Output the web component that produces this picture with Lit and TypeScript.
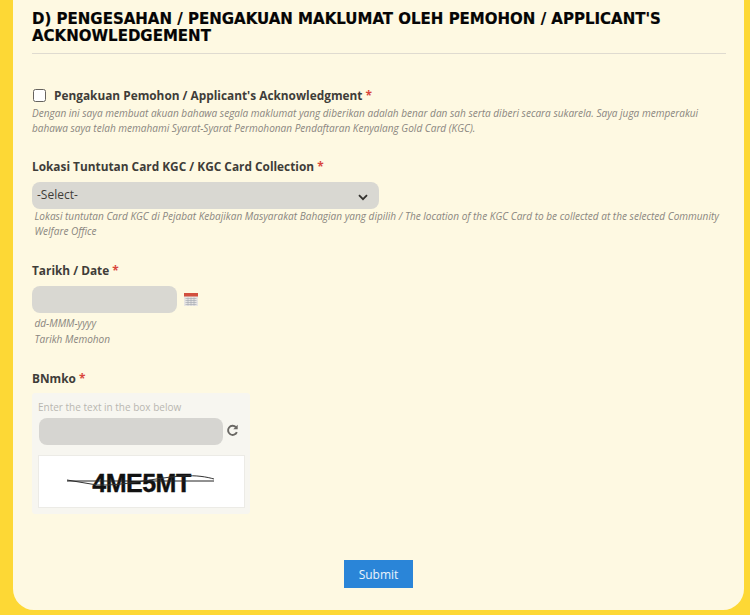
import { LitElement, html, css } from "lit";
import { customElement } from "lit/decorators.js";

@customElement("app-root")
export class AppRoot extends LitElement {
  static styles = css`
    :host { display: block; width: 750px; height: 615px; overflow: hidden; background: #fdd835; font-family: "Open Sans", sans-serif; }
    .card { box-sizing: border-box; width: 731px; height: 610px; margin-left: 13px; background: #fef9e2; border-radius: 0 0 21px 21px; padding: 11px 18px 0 19px; display: flex; flex-direction: column; }
    h2 { margin: 0; font: bold 15px/17px "DejaVu Sans", sans-serif; color: #050505; -webkit-text-stroke: 0.2px #050505; }
    hr { margin: 8px 0 0; border: 0; height: 1px; background: #dfdbd0; }
    .label { font-size: 11.85px; line-height: 15px; font-weight: 700; color: #3f3d39; }
    .req { color: #d9463c; }
    .help { font-size: 10.05px; line-height: 15px; font-style: italic; color: #8a8680; }
    .ack { margin-top: 32px; display: flex; align-items: center; gap: 8px; height: 18px; }
    .box { box-sizing: border-box; width: 13px; height: 13px; margin: 1px 0 0 1px; background: #fff; border: 1px solid #66635e; border-radius: 2.5px; }
    .ack-help { margin-top: 2px; }
    .field-1 { margin-top: 23px; }
    .field-2 { margin-top: 24px; }
    .field-3 { margin-top: 24px; }
    .select { box-sizing: border-box; margin-top: 8px; width: 347px; height: 27px; padding: 0 11px 3px 5px; background: #d9d8d2; border-radius: 8px; display: flex; align-items: center; justify-content: space-between; font-size: 12px; color: #3f3d39; }
    .select svg { margin-top: 7px; }
    .inset { padding-left: 2.5px; }
    .select-help { margin-top: 0; }
    .date-row { margin-top: 8px; display: flex; align-items: center; gap: 7px; }
    .input { height: 27px; background: #d9d8d2; border-radius: 8px; }
    .date { width: 145px; }
    .date-help { margin-top: 2px; line-height: 16px; }
    .captcha { box-sizing: border-box; margin-top: 7px; width: 218px; height: 121px; background: #f7f6f0; border-radius: 3px; padding: 7px 6px 0 6px; }
    .cap-title { font-size: 10px; line-height: 14px; color: #b9b7b1; }
    .cap-row { margin: 4px 0 0 1px; display: flex; align-items: center; gap: 3px; }
    .cap-input { width: 184px; height: 27px; background: #d6d5d1; border-radius: 8px; }
    .cap-row svg { margin-bottom: 3px; }
    .image { box-sizing: border-box; margin: 10px 0 0 0; width: 207px; height: 53px; background: #fff; border: 1px solid #ecebe6; display: flex; align-items: center; justify-content: center; position: relative; }
    .code { font: bold 25px/1 "Liberation Sans", sans-serif; color: #111; letter-spacing: -0.5px; -webkit-text-stroke: 0.4px #111; position: relative; top: 2px; }
    .strike { position: absolute; left: 28px; top: 17px; }
    .actions { margin-top: 46px; display: flex; justify-content: center; padding-right: 1px; }
    button { width: 69px; height: 28px; border: 0; padding: 0; background: #2a85d8; color: #eaf3fb; font: 12px "Open Sans", sans-serif; border-radius: 0; }
  `;

  render() {
    return html`
      <div class="card">
        <h2>D) PENGESAHAN / PENGAKUAN MAKLUMAT OLEH PEMOHON / APPLICANT'S ACKNOWLEDGEMENT</h2>
        <hr />

        <div class="ack">
          <span class="box"></span>
          <span class="label">Pengakuan Pemohon / Applicant's Acknowledgment <span class="req">*</span></span>
        </div>
        <div class="help ack-help">Dengan ini saya membuat akuan bahawa segala maklumat yang diberikan adalah benar dan sah serta diberi secara sukarela. Saya juga memperakui<br />bahawa saya telah memahami Syarat-Syarat Permohonan Pendaftaran Kenyalang Gold Card (KGC).</div>

        <div class="field-1">
          <div class="label">Lokasi Tuntutan Card KGC / KGC Card Collection <span class="req">*</span></div>
          <div class="select">
            <span>-Select-</span>
            <svg width="10" height="7" viewBox="0 0 10 7" fill="none"><path d="M1 1.2 5 5.2 9 1.2" stroke="#33312e" stroke-width="1.8"/></svg>
          </div>
          <div class="help inset select-help">Lokasi tuntutan Card KGC di Pejabat Kebajikan Masyarakat Bahagian yang dipilih / The location of the KGC Card to be collected at the selected Community<br />Welfare Office</div>
        </div>

        <div class="field-2">
          <div class="label">Tarikh / Date <span class="req">*</span></div>
          <div class="date-row">
            <div class="input date"></div>
            <svg width="14" height="13" viewBox="0 0 14 13">
              <rect x="0" y="0" width="14" height="13" fill="#e8e6e4"/>
              <rect x="0" y="0" width="14" height="3.5" fill="#d2503f"/>
              <path d="M1.5 5.5h11M1.5 7.5h11M1.5 9.5h11M1.5 11.5h11M4 4.5v8M7 4.5v8M10 4.5v8" stroke="#a9adb5" stroke-width=".7" fill="none"/>
            </svg>
          </div>
          <div class="help inset date-help">dd-MMM-yyyy<br />Tarikh Memohon</div>
        </div>

        <div class="field-3">
          <div class="label">BNmko <span class="req">*</span></div>
          <div class="captcha">
            <div class="cap-title">Enter the text in the box below</div>
            <div class="cap-row">
              <div class="cap-input"></div>
              <svg width="13" height="13" viewBox="0 0 12 12" fill="none">
                <path d="M10 7.5A4.2 4.2 0 1 1 9.2 3" stroke="#6a6864" stroke-width="1.8"/>
                <path d="M10.8.8v4.1H6.7z" fill="#6a6864"/>
              </svg>
            </div>
            <div class="image">
              <span class="code">4ME5MT</span>
              <svg class="strike" width="150" height="16" viewBox="0 0 150 16" fill="none">
                <path d="M0 7 30 12C60 13 85 5 115 3 130 2 140 4 147 6" stroke="#333" stroke-width="1"/>
                <path d="M0 8H147" stroke="#222" stroke-width="1"/>
              </svg>
            </div>
          </div>
        </div>

        <div class="actions"><button>Submit</button></div>
      </div>
    `;
  }
}
